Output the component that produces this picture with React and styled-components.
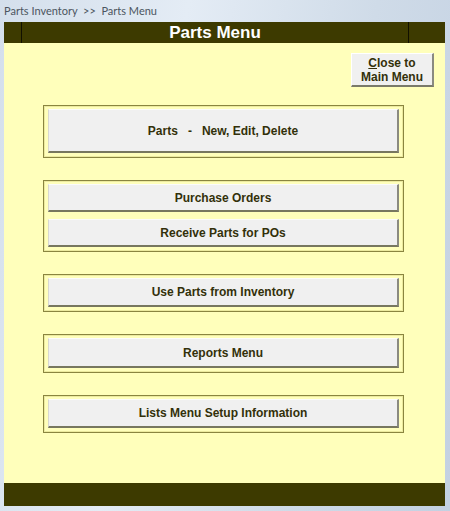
import React from "react";
import styled, { createGlobalStyle } from "styled-components";

const GlobalStyle = createGlobalStyle`
  html, body {
    margin: 0;
    padding: 0;
  }
  body {
    width: 450px;
    height: 511px;
    overflow: hidden;
    background: linear-gradient(100deg, #d4dfec 0%, #e4ecf5 35%, #cfdbe8 70%, #c3d1e2 100%);
    font-family: "Liberation Sans", Arial, sans-serif;
  }
`;

const Window = styled.div`
  height: 511px;
  display: flex;
  flex-direction: column;
`;

const Caption = styled.div`
  height: 22px;
  padding-left: 4px;
  display: flex;
  align-items: center;
  padding-bottom: 1px;
  box-sizing: border-box;
  font-family: Lato, "Noto Sans", sans-serif;
  font-size: 11px;
  color: #4c5560;
  white-space: pre;
`;

const Form = styled.div`
  flex: 1;
  margin: 0 5px 5px 4px;
  display: flex;
  flex-direction: column;
  background: #ffffbb;
`;

const Header = styled.div`
  height: 21px;
  display: grid;
  grid-template-columns: 17px 1fr 36px;
  background: #3d3a00;
`;

const HeaderCell = styled.div`
  border-left: ${(p) => (p.$divider ? "1px solid #111000" : "none")};
  border-right: ${(p) => (p.$divider ? "1px solid #111000" : "none")};
  display: flex;
  align-items: center;
  justify-content: center;
  color: #ffffff;
  font-weight: bold;
  font-size: 17px;
`;

const Body = styled.div`
  flex: 1;
  display: flex;
  flex-direction: column;
  padding: 10px 11px 0 39px;
`;

const TopRow = styled.div`
  display: flex;
  justify-content: flex-end;
  margin-bottom: 18px;
`;

const CloseButton = styled.button`
  width: 83px;
  height: 34px;
  padding: 0;
  background: #f0f0f0;
  border-top: 1px solid #ffffff;
  border-left: 1px solid #ffffff;
  border-right: 2px solid #8a8a80;
  border-bottom: 2px solid #7a7a6a;
  font-family: "Liberation Sans", Arial, sans-serif;
  font-weight: bold;
  font-size: 12px;
  line-height: 14px;
  color: #33300a;
  cursor: pointer;

  u {
    text-decoration: underline;
  }
`;

const Group = styled.div`
  width: 361px;
  box-sizing: border-box;
  display: flex;
  flex-direction: column;
  gap: 7px;
  padding: 3px 4px 4px 4px;
  margin-bottom: 22px;
  border: 1px solid #8a8540;
  box-shadow: inset 0 0 0 1px #ecea9e;
`;

const MenuButton = styled.button`
  height: ${(p) => p.$h || 29}px;
  width: 100%;
  padding: 0;
  box-sizing: border-box;
  background: #f0f0f0;
  border-top: 1px solid #fbfbfb;
  border-left: 1px solid #d8d8d0;
  border-right: 2px solid #8a8a80;
  border-bottom: 2px solid #77775f;
  font-family: "Liberation Sans", Arial, sans-serif;
  font-weight: bold;
  font-size: 12px;
  color: #33300a;
  white-space: pre;
  cursor: pointer;
`;

const Footer = styled.div`
  height: 23px;
  background: #3d3a00;
`;

const groups = [
  [{ label: "Parts   -   New, Edit, Delete", h: 44 }],
  [{ label: "Purchase Orders", h: 28 }, { label: "Receive Parts for POs", h: 28 }],
  [{ label: "Use Parts from Inventory" }],
  [{ label: "Reports Menu", h: 30 }],
  [{ label: "Lists Menu Setup Information" }],
];

export default function App() {
  return (
    <>
      <GlobalStyle />
      <Window>
        <Caption>Parts Inventory  &gt;&gt;  Parts Menu</Caption>
        <Form>
          <Header>
            <HeaderCell />
            <HeaderCell $divider>Parts Menu</HeaderCell>
            <HeaderCell />
          </Header>
          <Body>
            <TopRow>
              <CloseButton>
                <u>C</u>lose to
                <br />
                Main Menu
              </CloseButton>
            </TopRow>
            {groups.map((g, i) => (
              <Group key={i}>
                {g.map((b) => (
                  <MenuButton key={b.label} $h={b.h}>
                    {b.label}
                  </MenuButton>
                ))}
              </Group>
            ))}
          </Body>
          <Footer />
        </Form>
      </Window>
    </>
  );
}
